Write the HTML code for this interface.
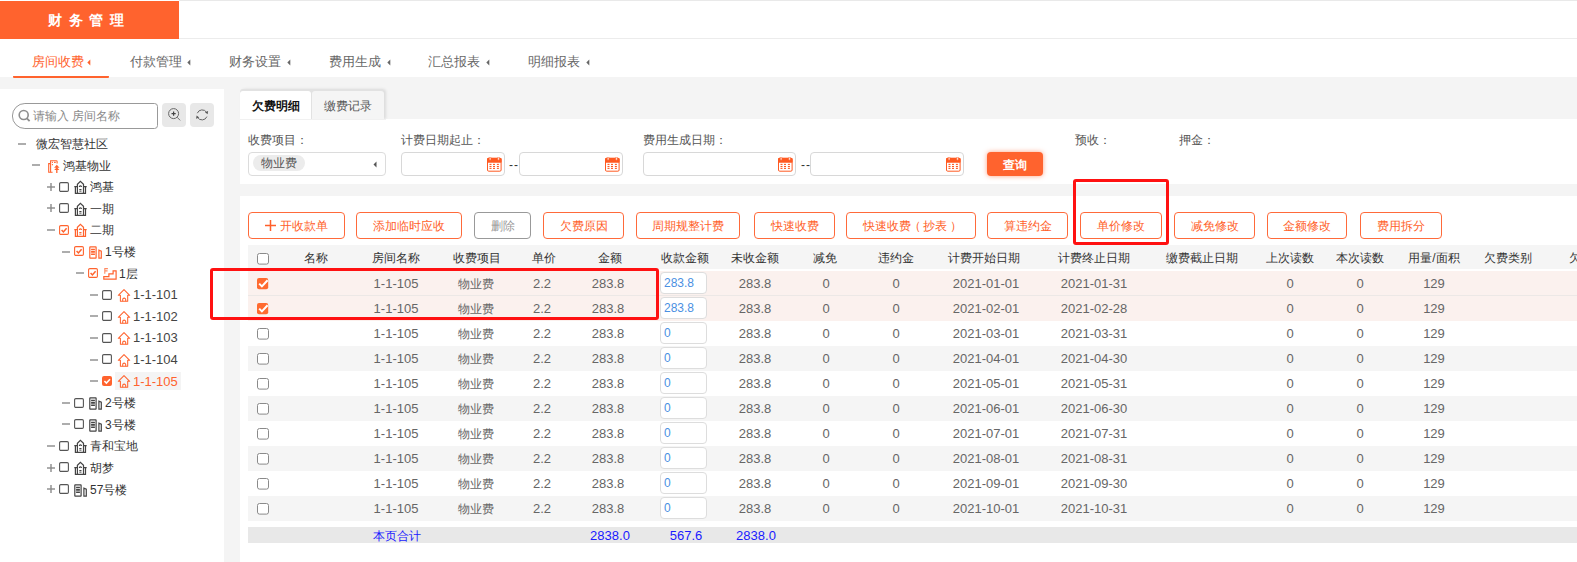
<!DOCTYPE html>
<html><head><meta charset="utf-8"><style>
html,body{margin:0;padding:0;}
body{width:1577px;height:562px;overflow:hidden;position:relative;background:#fff;font-family:"Liberation Sans", sans-serif;}
</style></head><body>
<div style="position:absolute;left:179px;top:0px;width:1398px;height:1px;background:#e9e9e9"></div>
<div style="position:absolute;left:0px;top:1px;width:179px;height:38px;background:#ff632e"></div>
<div style="position:absolute;left:179px;top:38px;width:1398px;height:1px;background:#ececec"></div>
<div style="position:absolute;left:48px;top:10px;font-size:14px;line-height:20px;color:#fff;white-space:nowrap;font-weight:bold;letter-spacing:6.7px">财务管理</div>
<div style="position:absolute;left:32px;top:52px;font-size:13px;line-height:20px;color:#ff632e;white-space:nowrap;">房间收费</div>
<svg style="position:absolute;left:87px;top:59px" width="4" height="7" viewBox="0 0 4 7"><path d="M3.3 0.5 L0.3 3.5 L3.3 6.5 Z" fill="#ff632e"/></svg>
<div style="position:absolute;left:130px;top:52px;font-size:13px;line-height:20px;color:#666;white-space:nowrap;">付款管理</div>
<svg style="position:absolute;left:187px;top:59px" width="4" height="7" viewBox="0 0 4 7"><path d="M3.3 0.5 L0.3 3.5 L3.3 6.5 Z" fill="#666"/></svg>
<div style="position:absolute;left:229px;top:52px;font-size:13px;line-height:20px;color:#666;white-space:nowrap;">财务设置</div>
<svg style="position:absolute;left:287px;top:59px" width="4" height="7" viewBox="0 0 4 7"><path d="M3.3 0.5 L0.3 3.5 L3.3 6.5 Z" fill="#666"/></svg>
<div style="position:absolute;left:329px;top:52px;font-size:13px;line-height:20px;color:#666;white-space:nowrap;">费用生成</div>
<svg style="position:absolute;left:387px;top:59px" width="4" height="7" viewBox="0 0 4 7"><path d="M3.3 0.5 L0.3 3.5 L3.3 6.5 Z" fill="#666"/></svg>
<div style="position:absolute;left:428px;top:52px;font-size:13px;line-height:20px;color:#666;white-space:nowrap;">汇总报表</div>
<svg style="position:absolute;left:486px;top:59px" width="4" height="7" viewBox="0 0 4 7"><path d="M3.3 0.5 L0.3 3.5 L3.3 6.5 Z" fill="#666"/></svg>
<div style="position:absolute;left:528px;top:52px;font-size:13px;line-height:20px;color:#666;white-space:nowrap;">明细报表</div>
<svg style="position:absolute;left:586px;top:59px" width="4" height="7" viewBox="0 0 4 7"><path d="M3.3 0.5 L0.3 3.5 L3.3 6.5 Z" fill="#666"/></svg>
<div style="position:absolute;left:13px;top:76px;width:96px;height:2px;background:#ff632e;border-radius:1px"></div>
<div style="position:absolute;left:0px;top:77px;width:1577px;height:485px;background:#f4f4f4"></div>
<div style="position:absolute;left:13px;top:76px;width:96px;height:2px;background:#ff632e;border-radius:1px"></div>
<div style="position:absolute;left:0px;top:89px;width:224px;height:473px;background:#fff"></div>
<svg style="position:absolute;left:18px;top:140px" width="8" height="8" viewBox="0 0 8 8"><path d="M0 4 H8" stroke="#8a8a8a" stroke-width="1.4"/></svg>
<div style="position:absolute;left:36px;top:134px;font-size:12px;line-height:20px;color:#333;white-space:nowrap;">微宏智慧社区</div>
<svg style="position:absolute;left:32px;top:161px" width="8" height="8" viewBox="0 0 8 8"><path d="M0 4 H8" stroke="#8a8a8a" stroke-width="1.4"/></svg>
<svg style="position:absolute;left:47px;top:159px" width="14" height="14" viewBox="0 0 14 14"><g fill="none" stroke="#ff632e" stroke-width="1.1"><path d="M3.6 13.3 V1.7 H9.2 Q10.1 1.7 10.1 2.6 V4.6"/><path d="M3.6 4.6 H1.7 V13.3 H5.6"/></g><path d="M4.9 3.4 H5.9 M4.9 5.6 H5.9 M7.1 3.4 H8.7" stroke="#ff632e" stroke-width="1.1"/><path d="M9.8 5.7 L7.1 8.7 H12.5 Z M9.8 8.2 L7.2 11.1 H12.4 Z" fill="#ff632e"/><path d="M9.8 10.5 V13.9" stroke="#ff632e" stroke-width="1.3"/></svg>
<div style="position:absolute;left:63px;top:156px;font-size:12px;line-height:20px;color:#333;white-space:nowrap;">鸿基物业</div>
<svg style="position:absolute;left:47px;top:183px" width="8" height="8" viewBox="0 0 8 8"><path d="M0 4 H8" stroke="#8a8a8a" stroke-width="1.4"/><path d="M4 0 V8" stroke="#8a8a8a" stroke-width="1.4"/></svg>
<svg style="position:absolute;left:59px;top:182px" width="10" height="10" viewBox="0 0 10 10"><rect x="0.6" y="0.6" width="8.8" height="8.8" rx="1.2" fill="#fff" stroke="#555" stroke-width="1.1"/></svg>
<svg style="position:absolute;left:74px;top:180px" width="13" height="14" viewBox="0 0 13 14"><g fill="none" stroke="#444" stroke-width="1.2"><path d="M3.4 13.4 V4.3 L6.4 1.3 L9.5 4.3 V13.4"/><path d="M1.4 6.7 V13.4 H11.5 V6.7 M0.3 6.7 H3.4 M9.5 6.7 H12.7"/><path d="M5.3 6.9 A1.1 1.1 0 0 1 7.5 6.9"/></g><path d="M5.3 9.5 H7.5 M5.3 11.1 H7.5" stroke="#444" stroke-width="1"/></svg>
<div style="position:absolute;left:90px;top:177px;font-size:12px;line-height:20px;color:#333;white-space:nowrap;">鸿基</div>
<svg style="position:absolute;left:47px;top:204px" width="8" height="8" viewBox="0 0 8 8"><path d="M0 4 H8" stroke="#8a8a8a" stroke-width="1.4"/><path d="M4 0 V8" stroke="#8a8a8a" stroke-width="1.4"/></svg>
<svg style="position:absolute;left:59px;top:203px" width="10" height="10" viewBox="0 0 10 10"><rect x="0.6" y="0.6" width="8.8" height="8.8" rx="1.2" fill="#fff" stroke="#555" stroke-width="1.1"/></svg>
<svg style="position:absolute;left:74px;top:202px" width="13" height="14" viewBox="0 0 13 14"><g fill="none" stroke="#444" stroke-width="1.2"><path d="M3.4 13.4 V4.3 L6.4 1.3 L9.5 4.3 V13.4"/><path d="M1.4 6.7 V13.4 H11.5 V6.7 M0.3 6.7 H3.4 M9.5 6.7 H12.7"/><path d="M5.3 6.9 A1.1 1.1 0 0 1 7.5 6.9"/></g><path d="M5.3 9.5 H7.5 M5.3 11.1 H7.5" stroke="#444" stroke-width="1"/></svg>
<div style="position:absolute;left:90px;top:199px;font-size:12px;line-height:20px;color:#333;white-space:nowrap;">一期</div>
<svg style="position:absolute;left:47px;top:226px" width="8" height="8" viewBox="0 0 8 8"><path d="M0 4 H8" stroke="#8a8a8a" stroke-width="1.4"/></svg>
<svg style="position:absolute;left:59px;top:225px" width="10" height="10" viewBox="0 0 10 10"><rect x="0.6" y="0.6" width="8.8" height="8.8" rx="1.2" fill="#fff" stroke="#ff632e" stroke-width="1.1"/><path d="M2.6 5 L4.4 6.9 L7.6 3.2" fill="none" stroke="#ff632e" stroke-width="1.5"/></svg>
<svg style="position:absolute;left:74px;top:223px" width="13" height="14" viewBox="0 0 13 14"><g fill="none" stroke="#ff632e" stroke-width="1.2"><path d="M3.4 13.4 V4.3 L6.4 1.3 L9.5 4.3 V13.4"/><path d="M1.4 6.7 V13.4 H11.5 V6.7 M0.3 6.7 H3.4 M9.5 6.7 H12.7"/><path d="M5.3 6.9 A1.1 1.1 0 0 1 7.5 6.9"/></g><path d="M5.3 9.5 H7.5 M5.3 11.1 H7.5" stroke="#ff632e" stroke-width="1"/></svg>
<div style="position:absolute;left:90px;top:220px;font-size:12px;line-height:20px;color:#333;white-space:nowrap;">二期</div>
<svg style="position:absolute;left:62px;top:248px" width="8" height="8" viewBox="0 0 8 8"><path d="M0 4 H8" stroke="#8a8a8a" stroke-width="1.4"/></svg>
<svg style="position:absolute;left:74px;top:246px" width="10" height="10" viewBox="0 0 10 10"><rect x="0.6" y="0.6" width="8.8" height="8.8" rx="1.2" fill="#fff" stroke="#ff632e" stroke-width="1.1"/><path d="M2.6 5 L4.4 6.9 L7.6 3.2" fill="none" stroke="#ff632e" stroke-width="1.5"/></svg>
<svg style="position:absolute;left:88px;top:245px" width="15" height="15" viewBox="0 0 15 15"><g fill="none" stroke="#ff632e" stroke-width="1.2"><rect x="1.8" y="1.8" width="6.3" height="11.3" rx="0.4"/><path d="M10.9 13.1 V5.2 L13.3 6.2 V13.1 Z"/></g><path d="M3.1 4.5 H6.9 M3.1 6.9 H6.9 M3.1 9.3 H6.9" stroke="#ff632e" stroke-width="1.6"/></svg>
<div style="position:absolute;left:105px;top:242px;font-size:12px;line-height:20px;color:#333;white-space:nowrap;">1号楼</div>
<svg style="position:absolute;left:76px;top:269px" width="8" height="8" viewBox="0 0 8 8"><path d="M0 4 H8" stroke="#8a8a8a" stroke-width="1.4"/></svg>
<svg style="position:absolute;left:88px;top:268px" width="10" height="10" viewBox="0 0 10 10"><rect x="0.6" y="0.6" width="8.8" height="8.8" rx="1.2" fill="#fff" stroke="#ff632e" stroke-width="1.1"/><path d="M2.6 5 L4.4 6.9 L7.6 3.2" fill="none" stroke="#ff632e" stroke-width="1.5"/></svg>
<svg style="position:absolute;left:102px;top:267px" width="16" height="14" viewBox="0 0 16 14"><path d="M1.8 12.1 V9.7 H6.9 V6.8 H11.1 V3.9 H14.1 V12.1 Z" fill="none" stroke="#ff632e" stroke-width="1.2"/><path d="M2.8 6.7 V1.6 H5.9 M2.8 3.9 H5.6" fill="none" stroke="#ff632e" stroke-width="1.1" opacity="0.75"/></svg>
<div style="position:absolute;left:119px;top:264px;font-size:12px;line-height:20px;color:#333;white-space:nowrap;">1层</div>
<svg style="position:absolute;left:90px;top:291px" width="8" height="8" viewBox="0 0 8 8"><path d="M0 4 H8" stroke="#8a8a8a" stroke-width="1.4"/></svg>
<svg style="position:absolute;left:102px;top:290px" width="10" height="10" viewBox="0 0 10 10"><rect x="0.6" y="0.6" width="8.8" height="8.8" rx="1.2" fill="#fff" stroke="#555" stroke-width="1.1"/></svg>
<svg style="position:absolute;left:117px;top:288px" width="14" height="14" viewBox="0 0 14 14"><g fill="none" stroke="#ff632e" stroke-width="1.05" stroke-linejoin="round"><path d="M7 1.6 L1.3 7.3 H3.4 V13.2 H10.7 V7.3 H12.7 Z"/><path d="M5.7 13.2 V11.6 A1.5 1.5 0 0 1 8.7 11.6 V13.2"/></g></svg>
<div style="position:absolute;left:133px;top:285px;font-size:13px;line-height:20px;color:#444;white-space:nowrap;">1-1-101</div>
<svg style="position:absolute;left:90px;top:312px" width="8" height="8" viewBox="0 0 8 8"><path d="M0 4 H8" stroke="#8a8a8a" stroke-width="1.4"/></svg>
<svg style="position:absolute;left:102px;top:311px" width="10" height="10" viewBox="0 0 10 10"><rect x="0.6" y="0.6" width="8.8" height="8.8" rx="1.2" fill="#fff" stroke="#555" stroke-width="1.1"/></svg>
<svg style="position:absolute;left:117px;top:310px" width="14" height="14" viewBox="0 0 14 14"><g fill="none" stroke="#ff632e" stroke-width="1.05" stroke-linejoin="round"><path d="M7 1.6 L1.3 7.3 H3.4 V13.2 H10.7 V7.3 H12.7 Z"/><path d="M5.7 13.2 V11.6 A1.5 1.5 0 0 1 8.7 11.6 V13.2"/></g></svg>
<div style="position:absolute;left:133px;top:307px;font-size:13px;line-height:20px;color:#444;white-space:nowrap;">1-1-102</div>
<svg style="position:absolute;left:90px;top:334px" width="8" height="8" viewBox="0 0 8 8"><path d="M0 4 H8" stroke="#8a8a8a" stroke-width="1.4"/></svg>
<svg style="position:absolute;left:102px;top:333px" width="10" height="10" viewBox="0 0 10 10"><rect x="0.6" y="0.6" width="8.8" height="8.8" rx="1.2" fill="#fff" stroke="#555" stroke-width="1.1"/></svg>
<svg style="position:absolute;left:117px;top:331px" width="14" height="14" viewBox="0 0 14 14"><g fill="none" stroke="#ff632e" stroke-width="1.05" stroke-linejoin="round"><path d="M7 1.6 L1.3 7.3 H3.4 V13.2 H10.7 V7.3 H12.7 Z"/><path d="M5.7 13.2 V11.6 A1.5 1.5 0 0 1 8.7 11.6 V13.2"/></g></svg>
<div style="position:absolute;left:133px;top:328px;font-size:13px;line-height:20px;color:#444;white-space:nowrap;">1-1-103</div>
<svg style="position:absolute;left:90px;top:356px" width="8" height="8" viewBox="0 0 8 8"><path d="M0 4 H8" stroke="#8a8a8a" stroke-width="1.4"/></svg>
<svg style="position:absolute;left:102px;top:354px" width="10" height="10" viewBox="0 0 10 10"><rect x="0.6" y="0.6" width="8.8" height="8.8" rx="1.2" fill="#fff" stroke="#555" stroke-width="1.1"/></svg>
<svg style="position:absolute;left:117px;top:353px" width="14" height="14" viewBox="0 0 14 14"><g fill="none" stroke="#ff632e" stroke-width="1.05" stroke-linejoin="round"><path d="M7 1.6 L1.3 7.3 H3.4 V13.2 H10.7 V7.3 H12.7 Z"/><path d="M5.7 13.2 V11.6 A1.5 1.5 0 0 1 8.7 11.6 V13.2"/></g></svg>
<div style="position:absolute;left:133px;top:350px;font-size:13px;line-height:20px;color:#444;white-space:nowrap;">1-1-104</div>
<div style="position:absolute;left:115px;top:372px;width:66px;height:18px;background:#f4f4f4"></div>
<svg style="position:absolute;left:90px;top:377px" width="8" height="8" viewBox="0 0 8 8"><path d="M0 4 H8" stroke="#8a8a8a" stroke-width="1.4"/></svg>
<svg style="position:absolute;left:102px;top:376px" width="10" height="10" viewBox="0 0 10 10"><rect x="0" y="0" width="10" height="10" rx="2" fill="#ff632e"/><path d="M2.4 5 L4.4 7.1 L8 3.2" fill="none" stroke="#fff" stroke-width="1.6"/></svg>
<svg style="position:absolute;left:117px;top:374px" width="14" height="14" viewBox="0 0 14 14"><g fill="none" stroke="#ff632e" stroke-width="1.05" stroke-linejoin="round"><path d="M7 1.6 L1.3 7.3 H3.4 V13.2 H10.7 V7.3 H12.7 Z"/><path d="M5.7 13.2 V11.6 A1.5 1.5 0 0 1 8.7 11.6 V13.2"/></g></svg>
<div style="position:absolute;left:133px;top:372px;font-size:13px;line-height:20px;color:#ff632e;white-space:nowrap;">1-1-105</div>
<svg style="position:absolute;left:62px;top:399px" width="8" height="8" viewBox="0 0 8 8"><path d="M0 4 H8" stroke="#8a8a8a" stroke-width="1.4"/></svg>
<svg style="position:absolute;left:74px;top:398px" width="10" height="10" viewBox="0 0 10 10"><rect x="0.6" y="0.6" width="8.8" height="8.8" rx="1.2" fill="#fff" stroke="#555" stroke-width="1.1"/></svg>
<svg style="position:absolute;left:88px;top:396px" width="15" height="15" viewBox="0 0 15 15"><g fill="none" stroke="#444" stroke-width="1.2"><rect x="1.8" y="1.8" width="6.3" height="11.3" rx="0.4"/><path d="M10.9 13.1 V5.2 L13.3 6.2 V13.1 Z"/></g><path d="M3.1 4.5 H6.9 M3.1 6.9 H6.9 M3.1 9.3 H6.9" stroke="#444" stroke-width="1.6"/></svg>
<div style="position:absolute;left:105px;top:393px;font-size:12px;line-height:20px;color:#333;white-space:nowrap;">2号楼</div>
<svg style="position:absolute;left:62px;top:420px" width="8" height="8" viewBox="0 0 8 8"><path d="M0 4 H8" stroke="#8a8a8a" stroke-width="1.4"/></svg>
<svg style="position:absolute;left:74px;top:419px" width="10" height="10" viewBox="0 0 10 10"><rect x="0.6" y="0.6" width="8.8" height="8.8" rx="1.2" fill="#fff" stroke="#555" stroke-width="1.1"/></svg>
<svg style="position:absolute;left:88px;top:418px" width="15" height="15" viewBox="0 0 15 15"><g fill="none" stroke="#444" stroke-width="1.2"><rect x="1.8" y="1.8" width="6.3" height="11.3" rx="0.4"/><path d="M10.9 13.1 V5.2 L13.3 6.2 V13.1 Z"/></g><path d="M3.1 4.5 H6.9 M3.1 6.9 H6.9 M3.1 9.3 H6.9" stroke="#444" stroke-width="1.6"/></svg>
<div style="position:absolute;left:105px;top:415px;font-size:12px;line-height:20px;color:#333;white-space:nowrap;">3号楼</div>
<svg style="position:absolute;left:47px;top:442px" width="8" height="8" viewBox="0 0 8 8"><path d="M0 4 H8" stroke="#8a8a8a" stroke-width="1.4"/></svg>
<svg style="position:absolute;left:59px;top:441px" width="10" height="10" viewBox="0 0 10 10"><rect x="0.6" y="0.6" width="8.8" height="8.8" rx="1.2" fill="#fff" stroke="#555" stroke-width="1.1"/></svg>
<svg style="position:absolute;left:74px;top:439px" width="13" height="14" viewBox="0 0 13 14"><g fill="none" stroke="#444" stroke-width="1.2"><path d="M3.4 13.4 V4.3 L6.4 1.3 L9.5 4.3 V13.4"/><path d="M1.4 6.7 V13.4 H11.5 V6.7 M0.3 6.7 H3.4 M9.5 6.7 H12.7"/><path d="M5.3 6.9 A1.1 1.1 0 0 1 7.5 6.9"/></g><path d="M5.3 9.5 H7.5 M5.3 11.1 H7.5" stroke="#444" stroke-width="1"/></svg>
<div style="position:absolute;left:90px;top:436px;font-size:12px;line-height:20px;color:#333;white-space:nowrap;">青和宝地</div>
<svg style="position:absolute;left:47px;top:464px" width="8" height="8" viewBox="0 0 8 8"><path d="M0 4 H8" stroke="#8a8a8a" stroke-width="1.4"/><path d="M4 0 V8" stroke="#8a8a8a" stroke-width="1.4"/></svg>
<svg style="position:absolute;left:59px;top:462px" width="10" height="10" viewBox="0 0 10 10"><rect x="0.6" y="0.6" width="8.8" height="8.8" rx="1.2" fill="#fff" stroke="#555" stroke-width="1.1"/></svg>
<svg style="position:absolute;left:74px;top:461px" width="13" height="14" viewBox="0 0 13 14"><g fill="none" stroke="#444" stroke-width="1.2"><path d="M3.4 13.4 V4.3 L6.4 1.3 L9.5 4.3 V13.4"/><path d="M1.4 6.7 V13.4 H11.5 V6.7 M0.3 6.7 H3.4 M9.5 6.7 H12.7"/><path d="M5.3 6.9 A1.1 1.1 0 0 1 7.5 6.9"/></g><path d="M5.3 9.5 H7.5 M5.3 11.1 H7.5" stroke="#444" stroke-width="1"/></svg>
<div style="position:absolute;left:90px;top:458px;font-size:12px;line-height:20px;color:#333;white-space:nowrap;">胡梦</div>
<svg style="position:absolute;left:47px;top:485px" width="8" height="8" viewBox="0 0 8 8"><path d="M0 4 H8" stroke="#8a8a8a" stroke-width="1.4"/><path d="M4 0 V8" stroke="#8a8a8a" stroke-width="1.4"/></svg>
<svg style="position:absolute;left:59px;top:484px" width="10" height="10" viewBox="0 0 10 10"><rect x="0.6" y="0.6" width="8.8" height="8.8" rx="1.2" fill="#fff" stroke="#555" stroke-width="1.1"/></svg>
<svg style="position:absolute;left:73px;top:483px" width="15" height="15" viewBox="0 0 15 15"><g fill="none" stroke="#444" stroke-width="1.2"><rect x="1.8" y="1.8" width="6.3" height="11.3" rx="0.4"/><path d="M10.9 13.1 V5.2 L13.3 6.2 V13.1 Z"/></g><path d="M3.1 4.5 H6.9 M3.1 6.9 H6.9 M3.1 9.3 H6.9" stroke="#444" stroke-width="1.6"/></svg>
<div style="position:absolute;left:90px;top:480px;font-size:12px;line-height:20px;color:#333;white-space:nowrap;">57号楼</div>
<svg style="position:absolute;left:12px;top:103px" width="147" height="26" viewBox="0 0 147 26"><path d="M12.9 0.5 H142.5 Q145.5 0.5 145.5 3.5 V22.5 Q145.5 25.5 142.5 25.5 H12.9 A12.5 12.5 0 0 1 12.9 0.5 Z" fill="#fff" stroke="#999" stroke-width="1"/><circle cx="11.7" cy="12" r="4.5" fill="none" stroke="#8e8e8e" stroke-width="1.6"/><path d="M14.9 15.3 L17.6 18.1" stroke="#8e8e8e" stroke-width="1.8"/></svg>
<div style="position:absolute;left:33px;top:106px;font-size:12px;line-height:20px;color:#8a8a8a;white-space:nowrap;">请输入 房间名称</div>
<div style="position:absolute;left:162px;top:103px;width:24px;height:24px;background:#e8e8e8;border-radius:4px"></div>
<svg style="position:absolute;left:162px;top:103px" width="24" height="24" viewBox="0 0 24 24"><circle cx="11.6" cy="10.6" r="5" fill="none" stroke="#666" stroke-width="1"/><path d="M15.1 14.2 L18.2 17.4" stroke="#777" stroke-width="1"/><path d="M9.5 10.6 H13.7 M11.6 8.5 V12.7" stroke="#444" stroke-width="1.2"/></svg>
<div style="position:absolute;left:190px;top:103px;width:24px;height:24px;background:#e8e8e8;border-radius:4px"></div>
<svg style="position:absolute;left:190px;top:103px" width="24" height="24" viewBox="0 0 24 24"><path d="M7.3 10.2 A5.2 5.2 0 0 1 16.6 9.4" fill="none" stroke="#666" stroke-width="1"/><path d="M17.6 11.2 L18.1 7.9 L15 9.2 Z" fill="#555"/><path d="M16.9 13.6 A5.2 5.2 0 0 1 7.6 14.4" fill="none" stroke="#666" stroke-width="1"/><path d="M6.6 12.4 L6.1 15.7 L9.2 14.4 Z" fill="#555"/></svg>
<div style="position:absolute;left:240px;top:89px;width:144px;height:30px;background:#e2e2e2;border-radius:3px 3px 0 0;box-shadow:2px 0 3px rgba(0,0,0,0.10)"></div>
<div style="position:absolute;left:240px;top:91px;width:71px;height:28px;background:#fff;border-radius:3px 3px 0 0"></div>
<div style="position:absolute;left:312px;top:91px;width:72px;height:28px;background:#f5f5f5;border-radius:3px 3px 0 0"></div>
<div style="position:absolute;left:252px;top:96px;font-size:12px;line-height:20px;color:#111;white-space:nowrap;font-weight:bold">欠费明细</div>
<div style="position:absolute;left:324px;top:96px;font-size:12px;line-height:20px;color:#555;white-space:nowrap;">缴费记录</div>
<div style="position:absolute;left:240px;top:119px;width:1337px;height:65px;background:#fff"></div>
<div style="position:absolute;left:240px;top:119px;width:146px;height:1px;background:#f1f1f1"></div>
<div style="position:absolute;left:248px;top:130px;font-size:12px;line-height:20px;color:#555;white-space:nowrap;">收费项目：</div>
<div style="position:absolute;left:401px;top:130px;font-size:12px;line-height:20px;color:#555;white-space:nowrap;">计费日期起止：</div>
<div style="position:absolute;left:643px;top:130px;font-size:12px;line-height:20px;color:#555;white-space:nowrap;">费用生成日期：</div>
<div style="position:absolute;left:1075px;top:130px;font-size:12px;line-height:20px;color:#555;white-space:nowrap;">预收：</div>
<div style="position:absolute;left:1179px;top:130px;font-size:12px;line-height:20px;color:#555;white-space:nowrap;">押金：</div>
<div style="position:absolute;left:248px;top:152px;width:138px;height:24px;box-sizing:border-box;border:1px solid #dcdcdc;border-radius:4px;background:#fff"></div>
<div style="position:absolute;left:253px;top:155px;width:52px;height:16px;background:#ececec;border-radius:8px"></div>
<div style="position:absolute;left:261px;top:153px;font-size:12px;line-height:20px;color:#555;white-space:nowrap;">物业费</div>
<svg style="position:absolute;left:373px;top:161px" width="4" height="7" viewBox="0 0 4 7"><path d="M3.5 0.5 L0.5 3.5 L3.5 6.5 Z" fill="#555"/></svg>
<div style="position:absolute;left:401px;top:152px;width:104px;height:24px;box-sizing:border-box;border:1px solid #d8d8d8;border-radius:4px;background:#fff"></div>
<svg style="position:absolute;left:487px;top:157px" width="15" height="15" viewBox="0 0 15 15"><rect x="0.5" y="1.2" width="13.6" height="13" rx="1.2" fill="#fff" stroke="#ff5a22" stroke-width="1"/><rect x="0" y="1" width="14.6" height="4.8" rx="1" fill="#ff5a22"/><rect x="2.3" y="0" width="1.6" height="3.2" rx="0.8" fill="#fff" stroke="#ff5a22" stroke-width="0.6"/><rect x="10.7" y="0" width="1.6" height="3.2" rx="0.8" fill="#fff" stroke="#ff5a22" stroke-width="0.6"/><rect x="2.5" y="6.8500000000000005" width="2" height="1.1" fill="#ff5a22"/><rect x="6" y="6.8500000000000005" width="2" height="1.1" fill="#ff5a22"/><rect x="9.9" y="6.8500000000000005" width="2" height="1.1" fill="#ff5a22"/><rect x="2.5" y="8.95" width="2" height="1.1" fill="#ff5a22"/><rect x="6" y="8.95" width="2" height="1.1" fill="#ff5a22"/><rect x="9.9" y="8.95" width="2" height="1.1" fill="#ff5a22"/><rect x="2.5" y="10.85" width="2" height="1.1" fill="#ff5a22"/><rect x="6" y="10.85" width="2" height="1.1" fill="#ff5a22"/><rect x="9.9" y="10.85" width="2" height="1.1" fill="#ff5a22"/></svg>
<div style="position:absolute;left:519px;top:152px;width:104px;height:24px;box-sizing:border-box;border:1px solid #d8d8d8;border-radius:4px;background:#fff"></div>
<svg style="position:absolute;left:605px;top:157px" width="15" height="15" viewBox="0 0 15 15"><rect x="0.5" y="1.2" width="13.6" height="13" rx="1.2" fill="#fff" stroke="#ff5a22" stroke-width="1"/><rect x="0" y="1" width="14.6" height="4.8" rx="1" fill="#ff5a22"/><rect x="2.3" y="0" width="1.6" height="3.2" rx="0.8" fill="#fff" stroke="#ff5a22" stroke-width="0.6"/><rect x="10.7" y="0" width="1.6" height="3.2" rx="0.8" fill="#fff" stroke="#ff5a22" stroke-width="0.6"/><rect x="2.5" y="6.8500000000000005" width="2" height="1.1" fill="#ff5a22"/><rect x="6" y="6.8500000000000005" width="2" height="1.1" fill="#ff5a22"/><rect x="9.9" y="6.8500000000000005" width="2" height="1.1" fill="#ff5a22"/><rect x="2.5" y="8.95" width="2" height="1.1" fill="#ff5a22"/><rect x="6" y="8.95" width="2" height="1.1" fill="#ff5a22"/><rect x="9.9" y="8.95" width="2" height="1.1" fill="#ff5a22"/><rect x="2.5" y="10.85" width="2" height="1.1" fill="#ff5a22"/><rect x="6" y="10.85" width="2" height="1.1" fill="#ff5a22"/><rect x="9.9" y="10.85" width="2" height="1.1" fill="#ff5a22"/></svg>
<div style="position:absolute;left:643px;top:152px;width:153px;height:24px;box-sizing:border-box;border:1px solid #d8d8d8;border-radius:4px;background:#fff"></div>
<svg style="position:absolute;left:778px;top:157px" width="15" height="15" viewBox="0 0 15 15"><rect x="0.5" y="1.2" width="13.6" height="13" rx="1.2" fill="#fff" stroke="#ff5a22" stroke-width="1"/><rect x="0" y="1" width="14.6" height="4.8" rx="1" fill="#ff5a22"/><rect x="2.3" y="0" width="1.6" height="3.2" rx="0.8" fill="#fff" stroke="#ff5a22" stroke-width="0.6"/><rect x="10.7" y="0" width="1.6" height="3.2" rx="0.8" fill="#fff" stroke="#ff5a22" stroke-width="0.6"/><rect x="2.5" y="6.8500000000000005" width="2" height="1.1" fill="#ff5a22"/><rect x="6" y="6.8500000000000005" width="2" height="1.1" fill="#ff5a22"/><rect x="9.9" y="6.8500000000000005" width="2" height="1.1" fill="#ff5a22"/><rect x="2.5" y="8.95" width="2" height="1.1" fill="#ff5a22"/><rect x="6" y="8.95" width="2" height="1.1" fill="#ff5a22"/><rect x="9.9" y="8.95" width="2" height="1.1" fill="#ff5a22"/><rect x="2.5" y="10.85" width="2" height="1.1" fill="#ff5a22"/><rect x="6" y="10.85" width="2" height="1.1" fill="#ff5a22"/><rect x="9.9" y="10.85" width="2" height="1.1" fill="#ff5a22"/></svg>
<div style="position:absolute;left:810px;top:152px;width:154px;height:24px;box-sizing:border-box;border:1px solid #d8d8d8;border-radius:4px;background:#fff"></div>
<svg style="position:absolute;left:946px;top:157px" width="15" height="15" viewBox="0 0 15 15"><rect x="0.5" y="1.2" width="13.6" height="13" rx="1.2" fill="#fff" stroke="#ff5a22" stroke-width="1"/><rect x="0" y="1" width="14.6" height="4.8" rx="1" fill="#ff5a22"/><rect x="2.3" y="0" width="1.6" height="3.2" rx="0.8" fill="#fff" stroke="#ff5a22" stroke-width="0.6"/><rect x="10.7" y="0" width="1.6" height="3.2" rx="0.8" fill="#fff" stroke="#ff5a22" stroke-width="0.6"/><rect x="2.5" y="6.8500000000000005" width="2" height="1.1" fill="#ff5a22"/><rect x="6" y="6.8500000000000005" width="2" height="1.1" fill="#ff5a22"/><rect x="9.9" y="6.8500000000000005" width="2" height="1.1" fill="#ff5a22"/><rect x="2.5" y="8.95" width="2" height="1.1" fill="#ff5a22"/><rect x="6" y="8.95" width="2" height="1.1" fill="#ff5a22"/><rect x="9.9" y="8.95" width="2" height="1.1" fill="#ff5a22"/><rect x="2.5" y="10.85" width="2" height="1.1" fill="#ff5a22"/><rect x="6" y="10.85" width="2" height="1.1" fill="#ff5a22"/><rect x="9.9" y="10.85" width="2" height="1.1" fill="#ff5a22"/></svg>
<div style="position:absolute;left:509px;top:155px;font-size:12px;line-height:20px;color:#333;white-space:nowrap;letter-spacing:1px">--</div>
<div style="position:absolute;left:801px;top:155px;font-size:12px;line-height:20px;color:#333;white-space:nowrap;letter-spacing:1px">--</div>
<div style="position:absolute;left:987px;top:152px;width:56px;height:24px;background:#ff632e;border-radius:4px;box-shadow:0 0 5px rgba(255,99,46,0.6)"></div>
<div style="position:absolute;left:987px;top:155px;width:56px;text-align:center;font-size:12px;line-height:20px;color:#fff;white-space:nowrap;font-weight:bold">查询</div>
<div style="position:absolute;left:240px;top:196px;width:1337px;height:366px;background:#fff"></div>
<div style="position:absolute;left:248px;top:212px;width:97px;height:27px;box-sizing:border-box;border:1px solid #ff6a3a;border-radius:4px;background:#fff"></div>
<svg style="position:absolute;left:265px;top:220px" width="11" height="11" viewBox="0 0 11 11"><path d="M5.5 0 V11 M0 5.5 H11" stroke="#ff5f2a" stroke-width="1.5"/></svg>
<div style="position:absolute;left:280px;top:216px;font-size:12px;line-height:20px;color:#ff5f2a;white-space:nowrap;">开收款单</div>
<div style="position:absolute;left:356px;top:212px;width:106px;height:27px;box-sizing:border-box;border:1px solid #ff6a3a;border-radius:4px;background:#fff"></div>
<div style="position:absolute;left:356px;top:216px;width:106px;text-align:center;font-size:12px;line-height:20px;color:#ff5f2a;white-space:nowrap;">添加临时应收</div>
<div style="position:absolute;left:474px;top:212px;width:57px;height:27px;box-sizing:border-box;border:1px solid #999;border-radius:4px;background:#fff"></div>
<div style="position:absolute;left:474px;top:216px;width:57px;text-align:center;font-size:12px;line-height:20px;color:#999;white-space:nowrap;">删除</div>
<div style="position:absolute;left:543px;top:212px;width:81px;height:27px;box-sizing:border-box;border:1px solid #ff6a3a;border-radius:4px;background:#fff"></div>
<div style="position:absolute;left:543px;top:216px;width:81px;text-align:center;font-size:12px;line-height:20px;color:#ff5f2a;white-space:nowrap;">欠费原因</div>
<div style="position:absolute;left:636px;top:212px;width:104px;height:27px;box-sizing:border-box;border:1px solid #ff6a3a;border-radius:4px;background:#fff"></div>
<div style="position:absolute;left:636px;top:216px;width:104px;text-align:center;font-size:12px;line-height:20px;color:#ff5f2a;white-space:nowrap;">周期规整计费</div>
<div style="position:absolute;left:754px;top:212px;width:81px;height:27px;box-sizing:border-box;border:1px solid #ff6a3a;border-radius:4px;background:#fff"></div>
<div style="position:absolute;left:754px;top:216px;width:81px;text-align:center;font-size:12px;line-height:20px;color:#ff5f2a;white-space:nowrap;">快速收费</div>
<div style="position:absolute;left:846px;top:212px;width:130px;height:27px;box-sizing:border-box;border:1px solid #ff6a3a;border-radius:4px;background:#fff"></div>
<div style="position:absolute;left:846px;top:216px;width:130px;text-align:center;font-size:12px;line-height:20px;color:#ff5f2a;white-space:nowrap;">快速收费<span style="position:relative;left:-2px">（</span>抄表<span style="position:relative;left:3px">）</span></div>
<div style="position:absolute;left:987px;top:212px;width:81px;height:27px;box-sizing:border-box;border:1px solid #ff6a3a;border-radius:4px;background:#fff"></div>
<div style="position:absolute;left:987px;top:216px;width:81px;text-align:center;font-size:12px;line-height:20px;color:#ff5f2a;white-space:nowrap;">算违约金</div>
<div style="position:absolute;left:1080px;top:212px;width:82px;height:27px;box-sizing:border-box;border:1px solid #ff6a3a;border-radius:4px;background:#fff"></div>
<div style="position:absolute;left:1080px;top:216px;width:82px;text-align:center;font-size:12px;line-height:20px;color:#ff5f2a;white-space:nowrap;">单价修改</div>
<div style="position:absolute;left:1174px;top:212px;width:81px;height:27px;box-sizing:border-box;border:1px solid #ff6a3a;border-radius:4px;background:#fff"></div>
<div style="position:absolute;left:1174px;top:216px;width:81px;text-align:center;font-size:12px;line-height:20px;color:#ff5f2a;white-space:nowrap;">减免修改</div>
<div style="position:absolute;left:1267px;top:212px;width:80px;height:27px;box-sizing:border-box;border:1px solid #ff6a3a;border-radius:4px;background:#fff"></div>
<div style="position:absolute;left:1267px;top:216px;width:80px;text-align:center;font-size:12px;line-height:20px;color:#ff5f2a;white-space:nowrap;">金额修改</div>
<div style="position:absolute;left:1360px;top:212px;width:82px;height:27px;box-sizing:border-box;border:1px solid #ff6a3a;border-radius:4px;background:#fff"></div>
<div style="position:absolute;left:1360px;top:216px;width:82px;text-align:center;font-size:12px;line-height:20px;color:#ff5f2a;white-space:nowrap;">费用拆分</div>
<div style="position:absolute;left:248px;top:245px;width:1329px;height:24px;background:#f5f5f5"></div>
<div style="position:absolute;left:256px;top:248px;width:120px;text-align:center;font-size:12px;line-height:20px;color:#333;white-space:nowrap;">名称</div>
<div style="position:absolute;left:336px;top:248px;width:120px;text-align:center;font-size:12px;line-height:20px;color:#333;white-space:nowrap;">房间名称</div>
<div style="position:absolute;left:417px;top:248px;width:120px;text-align:center;font-size:12px;line-height:20px;color:#333;white-space:nowrap;">收费项目</div>
<div style="position:absolute;left:484px;top:248px;width:120px;text-align:center;font-size:12px;line-height:20px;color:#333;white-space:nowrap;">单价</div>
<div style="position:absolute;left:550px;top:248px;width:120px;text-align:center;font-size:12px;line-height:20px;color:#333;white-space:nowrap;">金额</div>
<div style="position:absolute;left:625px;top:248px;width:120px;text-align:center;font-size:12px;line-height:20px;color:#333;white-space:nowrap;">收款金额</div>
<div style="position:absolute;left:695px;top:248px;width:120px;text-align:center;font-size:12px;line-height:20px;color:#333;white-space:nowrap;">未收金额</div>
<div style="position:absolute;left:765px;top:248px;width:120px;text-align:center;font-size:12px;line-height:20px;color:#333;white-space:nowrap;">减免</div>
<div style="position:absolute;left:836px;top:248px;width:120px;text-align:center;font-size:12px;line-height:20px;color:#333;white-space:nowrap;">违约金</div>
<div style="position:absolute;left:924px;top:248px;width:120px;text-align:center;font-size:12px;line-height:20px;color:#333;white-space:nowrap;">计费开始日期</div>
<div style="position:absolute;left:1034px;top:248px;width:120px;text-align:center;font-size:12px;line-height:20px;color:#333;white-space:nowrap;">计费终止日期</div>
<div style="position:absolute;left:1142px;top:248px;width:120px;text-align:center;font-size:12px;line-height:20px;color:#333;white-space:nowrap;">缴费截止日期</div>
<div style="position:absolute;left:1230px;top:248px;width:120px;text-align:center;font-size:12px;line-height:20px;color:#333;white-space:nowrap;">上次读数</div>
<div style="position:absolute;left:1300px;top:248px;width:120px;text-align:center;font-size:12px;line-height:20px;color:#333;white-space:nowrap;">本次读数</div>
<div style="position:absolute;left:1374px;top:248px;width:120px;text-align:center;font-size:12px;line-height:20px;color:#333;white-space:nowrap;">用量/面积</div>
<div style="position:absolute;left:1448px;top:248px;width:120px;text-align:center;font-size:12px;line-height:20px;color:#333;white-space:nowrap;">欠费类别</div>
<div style="position:absolute;left:1569px;top:248px;font-size:12px;line-height:20px;color:#333;white-space:nowrap;">欠费</div>
<svg style="position:absolute;left:257px;top:253px" width="12" height="12" viewBox="0 0 12 12"><rect x="0.5" y="0.5" width="11" height="10.6" rx="2" fill="#fff" stroke="#8a8a8a" stroke-width="1"/></svg>
<div style="position:absolute;left:248px;top:271px;width:1329px;height:25px;background:#fbf1ee"></div>
<div style="position:absolute;left:248px;top:295px;width:1329px;height:1px;background:#ece8e6"></div>
<svg style="position:absolute;left:257px;top:278px" width="12" height="12" viewBox="0 0 12 12"><rect x="0" y="0" width="11.2" height="11.2" rx="2" fill="#ff6a2f"/><path d="M2.2 5.6 L4.9 8.4 L10.6 2.2" fill="none" stroke="#fff" stroke-width="2"/></svg>
<div style="position:absolute;left:346px;top:274px;width:100px;text-align:center;font-size:13px;line-height:20px;color:#666;white-space:nowrap;">1-1-105</div>
<div style="position:absolute;left:426px;top:274px;width:100px;text-align:center;font-size:12px;line-height:20px;color:#666;white-space:nowrap;">物业费</div>
<div style="position:absolute;left:492px;top:274px;width:100px;text-align:center;font-size:13px;line-height:20px;color:#666;white-space:nowrap;">2.2</div>
<div style="position:absolute;left:558px;top:274px;width:100px;text-align:center;font-size:13px;line-height:20px;color:#666;white-space:nowrap;">283.8</div>
<div style="position:absolute;left:705px;top:274px;width:100px;text-align:center;font-size:13px;line-height:20px;color:#666;white-space:nowrap;">283.8</div>
<div style="position:absolute;left:776px;top:274px;width:100px;text-align:center;font-size:13px;line-height:20px;color:#666;white-space:nowrap;">0</div>
<div style="position:absolute;left:846px;top:274px;width:100px;text-align:center;font-size:13px;line-height:20px;color:#666;white-space:nowrap;">0</div>
<div style="position:absolute;left:936px;top:274px;width:100px;text-align:center;font-size:13px;line-height:20px;color:#666;white-space:nowrap;">2021-01-01</div>
<div style="position:absolute;left:1044px;top:274px;width:100px;text-align:center;font-size:13px;line-height:20px;color:#666;white-space:nowrap;">2021-01-31</div>
<div style="position:absolute;left:1240px;top:274px;width:100px;text-align:center;font-size:13px;line-height:20px;color:#666;white-space:nowrap;">0</div>
<div style="position:absolute;left:1310px;top:274px;width:100px;text-align:center;font-size:13px;line-height:20px;color:#666;white-space:nowrap;">0</div>
<div style="position:absolute;left:1384px;top:274px;width:100px;text-align:center;font-size:13px;line-height:20px;color:#666;white-space:nowrap;">129</div>
<div style="position:absolute;left:660px;top:272px;width:47px;height:22px;box-sizing:border-box;border:1px solid #dddddd;border-radius:4px;background:#fff"></div>
<div style="position:absolute;left:664px;top:273px;font-size:12px;line-height:20px;color:#4a90e2;white-space:nowrap;">283.8</div>
<div style="position:absolute;left:248px;top:296px;width:1329px;height:25px;background:#fbf1ee"></div>
<svg style="position:absolute;left:257px;top:303px" width="12" height="12" viewBox="0 0 12 12"><rect x="0" y="0" width="11.2" height="11.2" rx="2" fill="#ff6a2f"/><path d="M2.2 5.6 L4.9 8.4 L10.6 2.2" fill="none" stroke="#fff" stroke-width="2"/></svg>
<div style="position:absolute;left:346px;top:299px;width:100px;text-align:center;font-size:13px;line-height:20px;color:#666;white-space:nowrap;">1-1-105</div>
<div style="position:absolute;left:426px;top:299px;width:100px;text-align:center;font-size:12px;line-height:20px;color:#666;white-space:nowrap;">物业费</div>
<div style="position:absolute;left:492px;top:299px;width:100px;text-align:center;font-size:13px;line-height:20px;color:#666;white-space:nowrap;">2.2</div>
<div style="position:absolute;left:558px;top:299px;width:100px;text-align:center;font-size:13px;line-height:20px;color:#666;white-space:nowrap;">283.8</div>
<div style="position:absolute;left:705px;top:299px;width:100px;text-align:center;font-size:13px;line-height:20px;color:#666;white-space:nowrap;">283.8</div>
<div style="position:absolute;left:776px;top:299px;width:100px;text-align:center;font-size:13px;line-height:20px;color:#666;white-space:nowrap;">0</div>
<div style="position:absolute;left:846px;top:299px;width:100px;text-align:center;font-size:13px;line-height:20px;color:#666;white-space:nowrap;">0</div>
<div style="position:absolute;left:936px;top:299px;width:100px;text-align:center;font-size:13px;line-height:20px;color:#666;white-space:nowrap;">2021-02-01</div>
<div style="position:absolute;left:1044px;top:299px;width:100px;text-align:center;font-size:13px;line-height:20px;color:#666;white-space:nowrap;">2021-02-28</div>
<div style="position:absolute;left:1240px;top:299px;width:100px;text-align:center;font-size:13px;line-height:20px;color:#666;white-space:nowrap;">0</div>
<div style="position:absolute;left:1310px;top:299px;width:100px;text-align:center;font-size:13px;line-height:20px;color:#666;white-space:nowrap;">0</div>
<div style="position:absolute;left:1384px;top:299px;width:100px;text-align:center;font-size:13px;line-height:20px;color:#666;white-space:nowrap;">129</div>
<div style="position:absolute;left:660px;top:297px;width:47px;height:22px;box-sizing:border-box;border:1px solid #dddddd;border-radius:4px;background:#fff"></div>
<div style="position:absolute;left:664px;top:298px;font-size:12px;line-height:20px;color:#4a90e2;white-space:nowrap;">283.8</div>
<div style="position:absolute;left:248px;top:321px;width:1329px;height:25px;background:#fff"></div>
<svg style="position:absolute;left:257px;top:328px" width="12" height="12" viewBox="0 0 12 12"><rect x="0.5" y="0.5" width="11" height="10.6" rx="2" fill="#fff" stroke="#8a8a8a" stroke-width="1"/></svg>
<div style="position:absolute;left:346px;top:324px;width:100px;text-align:center;font-size:13px;line-height:20px;color:#666;white-space:nowrap;">1-1-105</div>
<div style="position:absolute;left:426px;top:324px;width:100px;text-align:center;font-size:12px;line-height:20px;color:#666;white-space:nowrap;">物业费</div>
<div style="position:absolute;left:492px;top:324px;width:100px;text-align:center;font-size:13px;line-height:20px;color:#666;white-space:nowrap;">2.2</div>
<div style="position:absolute;left:558px;top:324px;width:100px;text-align:center;font-size:13px;line-height:20px;color:#666;white-space:nowrap;">283.8</div>
<div style="position:absolute;left:705px;top:324px;width:100px;text-align:center;font-size:13px;line-height:20px;color:#666;white-space:nowrap;">283.8</div>
<div style="position:absolute;left:776px;top:324px;width:100px;text-align:center;font-size:13px;line-height:20px;color:#666;white-space:nowrap;">0</div>
<div style="position:absolute;left:846px;top:324px;width:100px;text-align:center;font-size:13px;line-height:20px;color:#666;white-space:nowrap;">0</div>
<div style="position:absolute;left:936px;top:324px;width:100px;text-align:center;font-size:13px;line-height:20px;color:#666;white-space:nowrap;">2021-03-01</div>
<div style="position:absolute;left:1044px;top:324px;width:100px;text-align:center;font-size:13px;line-height:20px;color:#666;white-space:nowrap;">2021-03-31</div>
<div style="position:absolute;left:1240px;top:324px;width:100px;text-align:center;font-size:13px;line-height:20px;color:#666;white-space:nowrap;">0</div>
<div style="position:absolute;left:1310px;top:324px;width:100px;text-align:center;font-size:13px;line-height:20px;color:#666;white-space:nowrap;">0</div>
<div style="position:absolute;left:1384px;top:324px;width:100px;text-align:center;font-size:13px;line-height:20px;color:#666;white-space:nowrap;">129</div>
<div style="position:absolute;left:660px;top:322px;width:47px;height:22px;box-sizing:border-box;border:1px solid #dddddd;border-radius:4px;background:#fff"></div>
<div style="position:absolute;left:664px;top:323px;font-size:12px;line-height:20px;color:#4a90e2;white-space:nowrap;">0</div>
<div style="position:absolute;left:248px;top:346px;width:1329px;height:25px;background:#f5f5f5"></div>
<svg style="position:absolute;left:257px;top:353px" width="12" height="12" viewBox="0 0 12 12"><rect x="0.5" y="0.5" width="11" height="10.6" rx="2" fill="#fff" stroke="#8a8a8a" stroke-width="1"/></svg>
<div style="position:absolute;left:346px;top:349px;width:100px;text-align:center;font-size:13px;line-height:20px;color:#666;white-space:nowrap;">1-1-105</div>
<div style="position:absolute;left:426px;top:349px;width:100px;text-align:center;font-size:12px;line-height:20px;color:#666;white-space:nowrap;">物业费</div>
<div style="position:absolute;left:492px;top:349px;width:100px;text-align:center;font-size:13px;line-height:20px;color:#666;white-space:nowrap;">2.2</div>
<div style="position:absolute;left:558px;top:349px;width:100px;text-align:center;font-size:13px;line-height:20px;color:#666;white-space:nowrap;">283.8</div>
<div style="position:absolute;left:705px;top:349px;width:100px;text-align:center;font-size:13px;line-height:20px;color:#666;white-space:nowrap;">283.8</div>
<div style="position:absolute;left:776px;top:349px;width:100px;text-align:center;font-size:13px;line-height:20px;color:#666;white-space:nowrap;">0</div>
<div style="position:absolute;left:846px;top:349px;width:100px;text-align:center;font-size:13px;line-height:20px;color:#666;white-space:nowrap;">0</div>
<div style="position:absolute;left:936px;top:349px;width:100px;text-align:center;font-size:13px;line-height:20px;color:#666;white-space:nowrap;">2021-04-01</div>
<div style="position:absolute;left:1044px;top:349px;width:100px;text-align:center;font-size:13px;line-height:20px;color:#666;white-space:nowrap;">2021-04-30</div>
<div style="position:absolute;left:1240px;top:349px;width:100px;text-align:center;font-size:13px;line-height:20px;color:#666;white-space:nowrap;">0</div>
<div style="position:absolute;left:1310px;top:349px;width:100px;text-align:center;font-size:13px;line-height:20px;color:#666;white-space:nowrap;">0</div>
<div style="position:absolute;left:1384px;top:349px;width:100px;text-align:center;font-size:13px;line-height:20px;color:#666;white-space:nowrap;">129</div>
<div style="position:absolute;left:660px;top:347px;width:47px;height:22px;box-sizing:border-box;border:1px solid #dddddd;border-radius:4px;background:#fff"></div>
<div style="position:absolute;left:664px;top:348px;font-size:12px;line-height:20px;color:#4a90e2;white-space:nowrap;">0</div>
<div style="position:absolute;left:248px;top:371px;width:1329px;height:25px;background:#fff"></div>
<svg style="position:absolute;left:257px;top:378px" width="12" height="12" viewBox="0 0 12 12"><rect x="0.5" y="0.5" width="11" height="10.6" rx="2" fill="#fff" stroke="#8a8a8a" stroke-width="1"/></svg>
<div style="position:absolute;left:346px;top:374px;width:100px;text-align:center;font-size:13px;line-height:20px;color:#666;white-space:nowrap;">1-1-105</div>
<div style="position:absolute;left:426px;top:374px;width:100px;text-align:center;font-size:12px;line-height:20px;color:#666;white-space:nowrap;">物业费</div>
<div style="position:absolute;left:492px;top:374px;width:100px;text-align:center;font-size:13px;line-height:20px;color:#666;white-space:nowrap;">2.2</div>
<div style="position:absolute;left:558px;top:374px;width:100px;text-align:center;font-size:13px;line-height:20px;color:#666;white-space:nowrap;">283.8</div>
<div style="position:absolute;left:705px;top:374px;width:100px;text-align:center;font-size:13px;line-height:20px;color:#666;white-space:nowrap;">283.8</div>
<div style="position:absolute;left:776px;top:374px;width:100px;text-align:center;font-size:13px;line-height:20px;color:#666;white-space:nowrap;">0</div>
<div style="position:absolute;left:846px;top:374px;width:100px;text-align:center;font-size:13px;line-height:20px;color:#666;white-space:nowrap;">0</div>
<div style="position:absolute;left:936px;top:374px;width:100px;text-align:center;font-size:13px;line-height:20px;color:#666;white-space:nowrap;">2021-05-01</div>
<div style="position:absolute;left:1044px;top:374px;width:100px;text-align:center;font-size:13px;line-height:20px;color:#666;white-space:nowrap;">2021-05-31</div>
<div style="position:absolute;left:1240px;top:374px;width:100px;text-align:center;font-size:13px;line-height:20px;color:#666;white-space:nowrap;">0</div>
<div style="position:absolute;left:1310px;top:374px;width:100px;text-align:center;font-size:13px;line-height:20px;color:#666;white-space:nowrap;">0</div>
<div style="position:absolute;left:1384px;top:374px;width:100px;text-align:center;font-size:13px;line-height:20px;color:#666;white-space:nowrap;">129</div>
<div style="position:absolute;left:660px;top:372px;width:47px;height:22px;box-sizing:border-box;border:1px solid #dddddd;border-radius:4px;background:#fff"></div>
<div style="position:absolute;left:664px;top:373px;font-size:12px;line-height:20px;color:#4a90e2;white-space:nowrap;">0</div>
<div style="position:absolute;left:248px;top:396px;width:1329px;height:25px;background:#f5f5f5"></div>
<svg style="position:absolute;left:257px;top:403px" width="12" height="12" viewBox="0 0 12 12"><rect x="0.5" y="0.5" width="11" height="10.6" rx="2" fill="#fff" stroke="#8a8a8a" stroke-width="1"/></svg>
<div style="position:absolute;left:346px;top:399px;width:100px;text-align:center;font-size:13px;line-height:20px;color:#666;white-space:nowrap;">1-1-105</div>
<div style="position:absolute;left:426px;top:399px;width:100px;text-align:center;font-size:12px;line-height:20px;color:#666;white-space:nowrap;">物业费</div>
<div style="position:absolute;left:492px;top:399px;width:100px;text-align:center;font-size:13px;line-height:20px;color:#666;white-space:nowrap;">2.2</div>
<div style="position:absolute;left:558px;top:399px;width:100px;text-align:center;font-size:13px;line-height:20px;color:#666;white-space:nowrap;">283.8</div>
<div style="position:absolute;left:705px;top:399px;width:100px;text-align:center;font-size:13px;line-height:20px;color:#666;white-space:nowrap;">283.8</div>
<div style="position:absolute;left:776px;top:399px;width:100px;text-align:center;font-size:13px;line-height:20px;color:#666;white-space:nowrap;">0</div>
<div style="position:absolute;left:846px;top:399px;width:100px;text-align:center;font-size:13px;line-height:20px;color:#666;white-space:nowrap;">0</div>
<div style="position:absolute;left:936px;top:399px;width:100px;text-align:center;font-size:13px;line-height:20px;color:#666;white-space:nowrap;">2021-06-01</div>
<div style="position:absolute;left:1044px;top:399px;width:100px;text-align:center;font-size:13px;line-height:20px;color:#666;white-space:nowrap;">2021-06-30</div>
<div style="position:absolute;left:1240px;top:399px;width:100px;text-align:center;font-size:13px;line-height:20px;color:#666;white-space:nowrap;">0</div>
<div style="position:absolute;left:1310px;top:399px;width:100px;text-align:center;font-size:13px;line-height:20px;color:#666;white-space:nowrap;">0</div>
<div style="position:absolute;left:1384px;top:399px;width:100px;text-align:center;font-size:13px;line-height:20px;color:#666;white-space:nowrap;">129</div>
<div style="position:absolute;left:660px;top:397px;width:47px;height:22px;box-sizing:border-box;border:1px solid #dddddd;border-radius:4px;background:#fff"></div>
<div style="position:absolute;left:664px;top:398px;font-size:12px;line-height:20px;color:#4a90e2;white-space:nowrap;">0</div>
<div style="position:absolute;left:248px;top:421px;width:1329px;height:25px;background:#fff"></div>
<svg style="position:absolute;left:257px;top:428px" width="12" height="12" viewBox="0 0 12 12"><rect x="0.5" y="0.5" width="11" height="10.6" rx="2" fill="#fff" stroke="#8a8a8a" stroke-width="1"/></svg>
<div style="position:absolute;left:346px;top:424px;width:100px;text-align:center;font-size:13px;line-height:20px;color:#666;white-space:nowrap;">1-1-105</div>
<div style="position:absolute;left:426px;top:424px;width:100px;text-align:center;font-size:12px;line-height:20px;color:#666;white-space:nowrap;">物业费</div>
<div style="position:absolute;left:492px;top:424px;width:100px;text-align:center;font-size:13px;line-height:20px;color:#666;white-space:nowrap;">2.2</div>
<div style="position:absolute;left:558px;top:424px;width:100px;text-align:center;font-size:13px;line-height:20px;color:#666;white-space:nowrap;">283.8</div>
<div style="position:absolute;left:705px;top:424px;width:100px;text-align:center;font-size:13px;line-height:20px;color:#666;white-space:nowrap;">283.8</div>
<div style="position:absolute;left:776px;top:424px;width:100px;text-align:center;font-size:13px;line-height:20px;color:#666;white-space:nowrap;">0</div>
<div style="position:absolute;left:846px;top:424px;width:100px;text-align:center;font-size:13px;line-height:20px;color:#666;white-space:nowrap;">0</div>
<div style="position:absolute;left:936px;top:424px;width:100px;text-align:center;font-size:13px;line-height:20px;color:#666;white-space:nowrap;">2021-07-01</div>
<div style="position:absolute;left:1044px;top:424px;width:100px;text-align:center;font-size:13px;line-height:20px;color:#666;white-space:nowrap;">2021-07-31</div>
<div style="position:absolute;left:1240px;top:424px;width:100px;text-align:center;font-size:13px;line-height:20px;color:#666;white-space:nowrap;">0</div>
<div style="position:absolute;left:1310px;top:424px;width:100px;text-align:center;font-size:13px;line-height:20px;color:#666;white-space:nowrap;">0</div>
<div style="position:absolute;left:1384px;top:424px;width:100px;text-align:center;font-size:13px;line-height:20px;color:#666;white-space:nowrap;">129</div>
<div style="position:absolute;left:660px;top:422px;width:47px;height:22px;box-sizing:border-box;border:1px solid #dddddd;border-radius:4px;background:#fff"></div>
<div style="position:absolute;left:664px;top:423px;font-size:12px;line-height:20px;color:#4a90e2;white-space:nowrap;">0</div>
<div style="position:absolute;left:248px;top:446px;width:1329px;height:25px;background:#f5f5f5"></div>
<svg style="position:absolute;left:257px;top:453px" width="12" height="12" viewBox="0 0 12 12"><rect x="0.5" y="0.5" width="11" height="10.6" rx="2" fill="#fff" stroke="#8a8a8a" stroke-width="1"/></svg>
<div style="position:absolute;left:346px;top:449px;width:100px;text-align:center;font-size:13px;line-height:20px;color:#666;white-space:nowrap;">1-1-105</div>
<div style="position:absolute;left:426px;top:449px;width:100px;text-align:center;font-size:12px;line-height:20px;color:#666;white-space:nowrap;">物业费</div>
<div style="position:absolute;left:492px;top:449px;width:100px;text-align:center;font-size:13px;line-height:20px;color:#666;white-space:nowrap;">2.2</div>
<div style="position:absolute;left:558px;top:449px;width:100px;text-align:center;font-size:13px;line-height:20px;color:#666;white-space:nowrap;">283.8</div>
<div style="position:absolute;left:705px;top:449px;width:100px;text-align:center;font-size:13px;line-height:20px;color:#666;white-space:nowrap;">283.8</div>
<div style="position:absolute;left:776px;top:449px;width:100px;text-align:center;font-size:13px;line-height:20px;color:#666;white-space:nowrap;">0</div>
<div style="position:absolute;left:846px;top:449px;width:100px;text-align:center;font-size:13px;line-height:20px;color:#666;white-space:nowrap;">0</div>
<div style="position:absolute;left:936px;top:449px;width:100px;text-align:center;font-size:13px;line-height:20px;color:#666;white-space:nowrap;">2021-08-01</div>
<div style="position:absolute;left:1044px;top:449px;width:100px;text-align:center;font-size:13px;line-height:20px;color:#666;white-space:nowrap;">2021-08-31</div>
<div style="position:absolute;left:1240px;top:449px;width:100px;text-align:center;font-size:13px;line-height:20px;color:#666;white-space:nowrap;">0</div>
<div style="position:absolute;left:1310px;top:449px;width:100px;text-align:center;font-size:13px;line-height:20px;color:#666;white-space:nowrap;">0</div>
<div style="position:absolute;left:1384px;top:449px;width:100px;text-align:center;font-size:13px;line-height:20px;color:#666;white-space:nowrap;">129</div>
<div style="position:absolute;left:660px;top:447px;width:47px;height:22px;box-sizing:border-box;border:1px solid #dddddd;border-radius:4px;background:#fff"></div>
<div style="position:absolute;left:664px;top:448px;font-size:12px;line-height:20px;color:#4a90e2;white-space:nowrap;">0</div>
<div style="position:absolute;left:248px;top:471px;width:1329px;height:25px;background:#fff"></div>
<svg style="position:absolute;left:257px;top:478px" width="12" height="12" viewBox="0 0 12 12"><rect x="0.5" y="0.5" width="11" height="10.6" rx="2" fill="#fff" stroke="#8a8a8a" stroke-width="1"/></svg>
<div style="position:absolute;left:346px;top:474px;width:100px;text-align:center;font-size:13px;line-height:20px;color:#666;white-space:nowrap;">1-1-105</div>
<div style="position:absolute;left:426px;top:474px;width:100px;text-align:center;font-size:12px;line-height:20px;color:#666;white-space:nowrap;">物业费</div>
<div style="position:absolute;left:492px;top:474px;width:100px;text-align:center;font-size:13px;line-height:20px;color:#666;white-space:nowrap;">2.2</div>
<div style="position:absolute;left:558px;top:474px;width:100px;text-align:center;font-size:13px;line-height:20px;color:#666;white-space:nowrap;">283.8</div>
<div style="position:absolute;left:705px;top:474px;width:100px;text-align:center;font-size:13px;line-height:20px;color:#666;white-space:nowrap;">283.8</div>
<div style="position:absolute;left:776px;top:474px;width:100px;text-align:center;font-size:13px;line-height:20px;color:#666;white-space:nowrap;">0</div>
<div style="position:absolute;left:846px;top:474px;width:100px;text-align:center;font-size:13px;line-height:20px;color:#666;white-space:nowrap;">0</div>
<div style="position:absolute;left:936px;top:474px;width:100px;text-align:center;font-size:13px;line-height:20px;color:#666;white-space:nowrap;">2021-09-01</div>
<div style="position:absolute;left:1044px;top:474px;width:100px;text-align:center;font-size:13px;line-height:20px;color:#666;white-space:nowrap;">2021-09-30</div>
<div style="position:absolute;left:1240px;top:474px;width:100px;text-align:center;font-size:13px;line-height:20px;color:#666;white-space:nowrap;">0</div>
<div style="position:absolute;left:1310px;top:474px;width:100px;text-align:center;font-size:13px;line-height:20px;color:#666;white-space:nowrap;">0</div>
<div style="position:absolute;left:1384px;top:474px;width:100px;text-align:center;font-size:13px;line-height:20px;color:#666;white-space:nowrap;">129</div>
<div style="position:absolute;left:660px;top:472px;width:47px;height:22px;box-sizing:border-box;border:1px solid #dddddd;border-radius:4px;background:#fff"></div>
<div style="position:absolute;left:664px;top:473px;font-size:12px;line-height:20px;color:#4a90e2;white-space:nowrap;">0</div>
<div style="position:absolute;left:248px;top:496px;width:1329px;height:25px;background:#f5f5f5"></div>
<svg style="position:absolute;left:257px;top:503px" width="12" height="12" viewBox="0 0 12 12"><rect x="0.5" y="0.5" width="11" height="10.6" rx="2" fill="#fff" stroke="#8a8a8a" stroke-width="1"/></svg>
<div style="position:absolute;left:346px;top:499px;width:100px;text-align:center;font-size:13px;line-height:20px;color:#666;white-space:nowrap;">1-1-105</div>
<div style="position:absolute;left:426px;top:499px;width:100px;text-align:center;font-size:12px;line-height:20px;color:#666;white-space:nowrap;">物业费</div>
<div style="position:absolute;left:492px;top:499px;width:100px;text-align:center;font-size:13px;line-height:20px;color:#666;white-space:nowrap;">2.2</div>
<div style="position:absolute;left:558px;top:499px;width:100px;text-align:center;font-size:13px;line-height:20px;color:#666;white-space:nowrap;">283.8</div>
<div style="position:absolute;left:705px;top:499px;width:100px;text-align:center;font-size:13px;line-height:20px;color:#666;white-space:nowrap;">283.8</div>
<div style="position:absolute;left:776px;top:499px;width:100px;text-align:center;font-size:13px;line-height:20px;color:#666;white-space:nowrap;">0</div>
<div style="position:absolute;left:846px;top:499px;width:100px;text-align:center;font-size:13px;line-height:20px;color:#666;white-space:nowrap;">0</div>
<div style="position:absolute;left:936px;top:499px;width:100px;text-align:center;font-size:13px;line-height:20px;color:#666;white-space:nowrap;">2021-10-01</div>
<div style="position:absolute;left:1044px;top:499px;width:100px;text-align:center;font-size:13px;line-height:20px;color:#666;white-space:nowrap;">2021-10-31</div>
<div style="position:absolute;left:1240px;top:499px;width:100px;text-align:center;font-size:13px;line-height:20px;color:#666;white-space:nowrap;">0</div>
<div style="position:absolute;left:1310px;top:499px;width:100px;text-align:center;font-size:13px;line-height:20px;color:#666;white-space:nowrap;">0</div>
<div style="position:absolute;left:1384px;top:499px;width:100px;text-align:center;font-size:13px;line-height:20px;color:#666;white-space:nowrap;">129</div>
<div style="position:absolute;left:660px;top:497px;width:47px;height:22px;box-sizing:border-box;border:1px solid #dddddd;border-radius:4px;background:#fff"></div>
<div style="position:absolute;left:664px;top:498px;font-size:12px;line-height:20px;color:#4a90e2;white-space:nowrap;">0</div>
<div style="position:absolute;left:248px;top:527px;width:1329px;height:16px;background:#e8e8e8"></div>
<div style="position:absolute;left:347px;top:527px;width:100px;text-align:center;font-size:12px;line-height:18px;color:#1a1aff;white-space:nowrap;">本页合计</div>
<div style="position:absolute;left:560px;top:527px;width:100px;text-align:center;font-size:13px;line-height:18px;color:#1a1aff;white-space:nowrap;">2838.0</div>
<div style="position:absolute;left:636px;top:527px;width:100px;text-align:center;font-size:13px;line-height:18px;color:#1a1aff;white-space:nowrap;">567.6</div>
<div style="position:absolute;left:706px;top:527px;width:100px;text-align:center;font-size:13px;line-height:18px;color:#1a1aff;white-space:nowrap;">2838.0</div>
<div style="position:absolute;left:210px;top:268px;width:449px;height:52px;box-sizing:border-box;border:3px solid #ff1111;border-radius:3px"></div>
<div style="position:absolute;left:1073px;top:179px;width:96px;height:66px;box-sizing:border-box;border:3px solid #ff1111;border-radius:3px"></div>
</body></html>
